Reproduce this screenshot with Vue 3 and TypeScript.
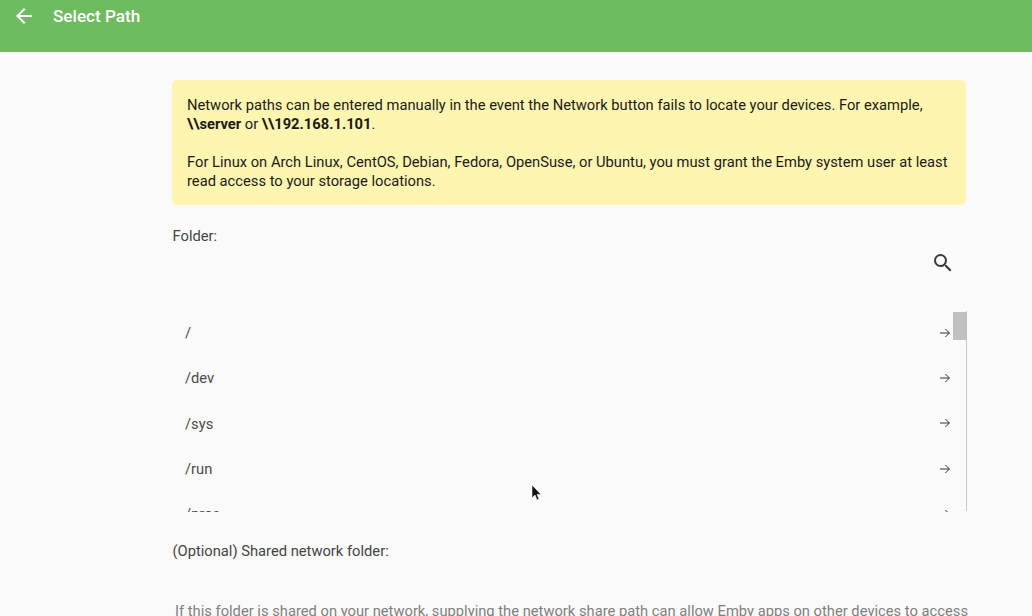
<script setup lang="ts">
const rows: string[] = ['/', '/dev', '/sys', '/run', '/proc']
</script>

<template>
  <div class="page">
    <header class="bar">
      <svg class="back" width="24" height="24" viewBox="0 0 24 24"><path d="M20 11H7.83l5.59-5.59L12 4l-8 8 8 8 1.41-1.41L7.83 13H20v-2z" fill="#fff" /></svg>
      <h1 class="title">Select Path</h1>
    </header>
    <main class="content">
      <div class="note">
        <p>Network paths can be entered manually in the event the Network button fails to locate your devices. For example, <b>\\server</b> or <b>\\192.168.1.101</b>.</p>
        <p class="second">For Linux on Arch Linux, CentOS, Debian, Fedora, OpenSuse, or Ubuntu, you must grant the Emby system user at least read access to your storage locations.</p>
      </div>
      <label class="label">Folder:</label>
      <div class="search-row">
        <svg width="24" height="24" viewBox="0 0 24 24"><path d="M15.5 14h-.79l-.28-.27A6.47 6.47 0 0 0 16 9.5 6.5 6.5 0 1 0 9.5 16c1.61 0 3.09-.59 4.23-1.57l.27.28v.79l5 4.99L20.49 19l-4.99-5zm-6 0C7.01 14 5 11.99 5 9.5S7.01 5 9.5 5 14 7.01 14 9.5 11.99 14 9.5 14z" fill="#3a3a3a" /></svg>
      </div>
      <div class="list">
        <div v-for="r in rows" :key="r" class="row">
          <span>{{ r }}</span>
          <svg class="go" width="12" height="12" viewBox="0 0 12 12"><path d="M1 6h9.400M6.400 2l4 4-4 4" fill="none" stroke="#333" stroke-width="1" /></svg>
        </div>
        <div class="track"><div class="thumb"></div></div>
      </div>
      <label class="label shared">(Optional) Shared network folder:</label>
      <p class="help">If this folder is shared on your network, supplying the network share path can allow Emby apps on other devices to access</p>
    </main>
    <svg class="cursor" width="12" height="18" viewBox="0 0 12 18"><path d="M1 1v13l3-3 2 5 2-1-2-4.600h4z" fill="#111" stroke="#fafafa" stroke-width=".6" /></svg>
  </div>
</template>

<style>
html, body { margin: 0; background: #fafafa; overflow: hidden; }
</style>

<style scoped>
.page {
  position: relative;
  width: 1032px;
  height: 616px;
  overflow: hidden;
  background: #fafafa;
  color: #222;
  font-family: Roboto, "Liberation Sans", sans-serif;
  font-size: 14.72px;
  line-height: 19px;
}
.bar {
  height: 52px;
  box-sizing: border-box;
  background: #6fbb5f;
  display: flex;
  align-items: flex-start;
  padding: 4px 0 0 12px;
  color: #fff;
}
.title {
  margin: 2px 0 0 17px;
  font-size: 17.12px;
  font-weight: 500;
  line-height: 21px;
}
.content {
  box-sizing: border-box;
  width: 794px;
  margin-left: 172px;
  padding-top: 28px;
}
.note {
  background: #fef5b0;
  border-radius: 5px;
  height: 125px;
  box-sizing: border-box;
  padding: 16px 15px;
  color: #1a1a1a;
}
.note p { margin: 0; }
.note .second { margin-top: 19px; }
.label { display: block; color: #444; padding-left: 0.5px; }
.content > .label:first-of-type { margin-top: 22px; }
.search-row {
  display: flex;
  justify-content: flex-end;
  padding-right: 12px;
  margin-top: 5px;
  height: 60px;
}
.search-row svg { margin-right: -1px; }
.list {
  position: relative;
  height: 201px;
  overflow: hidden;
  box-sizing: border-box;
  margin-right: -1px;
}
.row {
  height: 45.300px;
  display: flex;
  justify-content: space-between;
  align-items: center;
  padding: 0 16px 0 13px;
  color: #4a4a4a;
}
.go { margin-bottom: 2px; }
.track {
  position: absolute;
  top: 0;
  right: 0;
  width: 14px;
  height: 200px;
  border-right: 1px solid #c8c8c8;
  box-sizing: border-box;
}
.thumb {
  width: 14px;
  height: 28px;
  margin-top: 1px;
  background: #c1c1c1;
}
.shared { margin-top: 30px; }
.help {
  margin: 41px 0 0 3px;
  white-space: nowrap;
  color: #808080;
}
.cursor {
  position: absolute;
  left: 531px;
  top: 484px;
}
</style>
